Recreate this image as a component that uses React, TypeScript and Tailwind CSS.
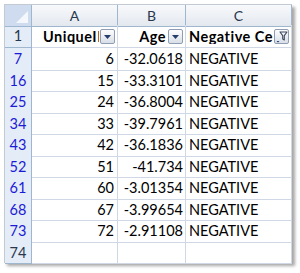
const rows: { n: string; id: string; age: string; neg: string; filtered: boolean }[] = [
  { n: '7', id: '6', age: '-32.0618', neg: 'NEGATIVE', filtered: true },
  { n: '16', id: '15', age: '-33.3101', neg: 'NEGATIVE', filtered: true },
  { n: '25', id: '24', age: '-36.8004', neg: 'NEGATIVE', filtered: true },
  { n: '34', id: '33', age: '-39.7961', neg: 'NEGATIVE', filtered: true },
  { n: '43', id: '42', age: '-36.1836', neg: 'NEGATIVE', filtered: true },
  { n: '52', id: '51', age: '-41.734', neg: 'NEGATIVE', filtered: true },
  { n: '61', id: '60', age: '-3.01354', neg: 'NEGATIVE', filtered: true },
  { n: '68', id: '67', age: '-3.99654', neg: 'NEGATIVE', filtered: true },
  { n: '73', id: '72', age: '-2.91108', neg: 'NEGATIVE', filtered: true },
  { n: '74', id: '', age: '', neg: '', filtered: false },
];

const DropButton = ({ funnel }: { funnel?: boolean }) => (
  <div className="absolute right-[2px] bottom-[3px] flex h-[15px] w-[15px] items-center justify-center rounded-[2px] border border-[#8e9db3] bg-gradient-to-b from-[#fdfdfe] to-[#d9dfe8]">
    {funnel ? (
      <svg width="13" height="13" viewBox="0 0 13 13">
        <path d="M1.5 11 L4.5 11 L3 12.6 Z" fill="#1b3a78" />
        <path d="M5 2 L12 2 L9.3 5.6 L9.3 10 L7.7 9 L7.7 5.6 Z" fill="none" stroke="#3c4a5e" strokeWidth="1.1" strokeLinejoin="round" />
      </svg>
    ) : (
      <svg width="9" height="6" viewBox="0 0 9 6">
        <path d="M1 1 L8 1 L4.5 5 Z" fill="#243d6b" />
      </svg>
    )}
  </div>
);

const App = () => {
  return (
    <div className="h-[273px] w-[300px] bg-white pl-[4px] pt-[4px] font-['Lato','Liberation_Sans',sans-serif] text-[14.5px] text-black">
      <div className="w-[288px] border-l border-t border-[#c3cad4] shadow-[3px_3px_3px_rgba(0,0,0,0.35)]">
        {/* column letters */}
        <div className="grid h-[20px] grid-cols-[27px_86px_68px_106px]">
          <div className="relative border-b border-r border-[#9eb6ce] bg-[#cfdcef]">
            <div className="absolute bottom-[3px] right-[3px] h-0 w-0 border-b-[12px] border-l-[12px] border-b-[#f4f7fb] border-l-transparent" />
          </div>
          {['A', 'B', 'C'].map((c) => (
            <div
              key={c}
              className="flex items-center justify-center border-b border-r border-[#9eb6ce] bg-gradient-to-b from-[#f8f9fb] to-[#e3e8ef] text-[14px] text-[#27374d]"
            >
              {c}
            </div>
          ))}
        </div>

        {/* header row */}
        <div className="grid h-[23px] grid-cols-[27px_86px_68px_106px] font-bold tracking-[0.5px]">
          <div className="flex items-center justify-center border-b border-r border-[#9eb6ce] bg-[#e4ecf7] font-normal tracking-normal text-[#27374d]">
            1
          </div>
          <div className="relative border-b border-r border-[#d0d7e5]">
            <span className="absolute bottom-[3px] left-[11px] right-[18px] overflow-hidden whitespace-nowrap leading-none">UniqueID</span>
            <DropButton />
          </div>
          <div className="relative border-b border-r border-[#d0d7e5]">
            <span className="absolute bottom-[3px] right-[19px] leading-none">Age</span>
            <DropButton />
          </div>
          <div className="relative border-b border-r border-[#d0d7e5]">
            <span className="absolute bottom-[3px] left-[3px] right-[18px] overflow-hidden whitespace-nowrap leading-none">Negative Cell</span>
            <DropButton funnel />
          </div>
        </div>

        {rows.map((r) => (
          <div key={r.n} className="grid h-[21.5px] grid-cols-[27px_86px_68px_106px]">
            <div
              className={`flex items-center justify-center border-b border-r border-[#9eb6ce] bg-[#e4ecf7] ${
                r.filtered ? 'text-[#1b1bd6]' : 'text-[#27374d]'
              }`}
            >
              {r.n}
            </div>
            <div className="flex items-center justify-end border-b border-r border-[#d0d7e5] pr-[3px]">{r.id}</div>
            <div className="flex items-center justify-end border-b border-r border-[#d0d7e5] pr-[2px]">{r.age}</div>
            <div className="flex items-center border-b border-r border-[#d0d7e5] pl-[3px]">{r.neg}</div>
          </div>
        ))}
      </div>
    </div>
  );
};

export default App;
